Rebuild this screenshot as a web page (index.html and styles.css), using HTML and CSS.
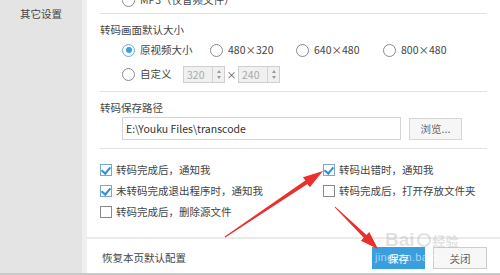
FILE: index.html
```html
<!DOCTYPE html>
<html>
<head>
<meta charset="utf-8">
<link rel="stylesheet" href="styles.css">
</head>
<body>
<div class="win">
  <aside class="side">
    <div class="side-item">其它设置</div>
  </aside>
  <div class="main">
    <div class="scroll">
      <div class="inner">
        <div class="row mp3"><span class="radio"></span><span class="lbl">MP3（仅音频文件）</span></div>
        <div class="sep s1"></div>
        <div class="title">转码画面默认大小</div>
        <div class="radios">
          <div class="opt"><span class="radio on"></span><span class="lbl">原视频大小</span></div>
          <div class="opt"><span class="radio"></span><span class="lbl">480×320</span></div>
          <div class="opt"><span class="radio"></span><span class="lbl">640×480</span></div>
          <div class="opt"><span class="radio"></span><span class="lbl">800×480</span></div>
        </div>
        <div class="custom">
          <div class="opt"><span class="radio"></span><span class="lbl">自定义</span></div>
          <div class="spin"><span class="val">320</span><span class="arrows"><i class="up"></i><i class="dn"></i></span></div>
          <span class="times">×</span>
          <div class="spin"><span class="val">240</span><span class="arrows"><i class="up"></i><i class="dn"></i></span></div>
        </div>
        <div class="sep s2"></div>
        <div class="title">转码保存路径</div>
        <div class="path">
          <div class="input">E:\Youku Files\transcode</div>
          <div class="btn browse">浏览...</div>
        </div>
        <div class="sep s3"></div>
        <div class="checks">
          <div class="chk"><span class="box on"></span><span class="lbl">转码完成后，通知我</span></div>
          <div class="chk"><span class="box on"></span><span class="lbl">转码出错时，通知我</span></div>
          <div class="chk"><span class="box on"></span><span class="lbl">未转码完成退出程序时，通知我</span></div>
          <div class="chk"><span class="box"></span><span class="lbl">转码完成后，打开存放文件夹</span></div>
          <div class="chk"><span class="box"></span><span class="lbl">转码完成后，删除源文件</span></div>
        </div>
      </div>
    </div>
    <div class="footer">
      <span class="reset">恢复本页默认配置</span>
      <div class="btns">
        <div class="btn save">保存</div>
        <div class="btn close">关闭</div>
      </div>
    </div>
  </div>
</div>
<div class="wm">
  <span class="wm-big">Bai</span><span class="wm-paw"></span><span class="wm-cn">经验</span>
</div>
<div class="wm-url">jingyan.baidu.com</div>
<svg class="arrows-ov" width="500" height="275" viewBox="0 0 500 275">
  <polygon points="224.7,236.6 305.3,180.5 303.0,177.2 323,171 309.8,187.2 307.5,183.9 225.3,237.4" fill="#e8302c"/>
  <polygon points="335.35,206.64 366.5,235.0 369.3,232.1 378,249 360.9,240.7 363.7,237.8 334.65,207.36" fill="#e8302c"/>
</svg>
</body>
</html>
```

FILE: styles.css
```css
* { box-sizing: border-box; }
html, body { margin: 0; padding: 0; }
body {
  width: 500px;
  height: 275px;
  overflow: hidden;
  position: relative;
  background: #fff;
  font-family: "Noto Sans CJK SC", "Noto Sans", sans-serif;
  font-size: 10.5px;
  color: #444;
}
.win {
  display: flex;
  width: 500px;
  height: 275px;
  border-bottom: 2px solid #c9c9c9;
}
.side {
  width: 87px;
  flex: none;
  background: #e4e4e4;
  border-right: 5px solid #efefef;
}
.side-item {
  padding: 6px 0 0 20px;
  height: 20px;
  line-height: 16px;
  color: #444;
}
.main {
  flex: 1;
  display: flex;
  flex-direction: column;
  min-width: 0;
}
.scroll {
  height: 237px;
  overflow: hidden;
  flex: none;
}
.inner {
  margin-top: -10px;
  padding: 0 13px;
}
.row, .opt, .chk {
  display: flex;
  align-items: center;
  height: 20px;
}
.mp3 { padding-left: 22px; }
.lbl { white-space: nowrap; line-height: 14px; }
.radio {
  width: 13px;
  height: 13px;
  border: 1px solid #8a8a8a;
  border-radius: 50%;
  background: #fff;
  flex: none;
  margin-right: 5px;
  position: relative;
}
.radio.on { border-color: #6aa9d8; }
.radio.on::after {
  content: "";
  position: absolute;
  left: 2.5px; top: 2.5px;
  width: 6px; height: 6px;
  border-radius: 50%;
  background: #3d9ee0;
}
.sep { height: 1px; background: #e2e2e2; }
.s1 { margin: 3px 0 8px; }
.s2 { margin: 7px 0 8px; }
.s3 { margin: 8px 0 10px; }
.title { height: 16px; line-height: 16px; }
.radios {
  margin-top: 2px;
  padding-left: 22px;
  display: grid;
  grid-template-columns: 88px 86px 87px auto;
}
.custom {
  margin-top: 4px;
  padding-left: 22px;
  display: flex;
  align-items: center;
  height: 20px;
}
.custom .opt { width: 61px; }
.spin {
  width: 42px;
  height: 17px;
  border: 1px solid #cfcfcf;
  background: #f0f0f0;
  display: flex;
  align-items: stretch;
}
.spin .val {
  flex: 1;
  padding-left: 3px;
  color: #aaa;
  line-height: 15px;
}
.spin .arrows {
  width: 12px;
  border-left: 1px solid #d2d2d2;
  display: flex;
  flex-direction: column;
  align-items: center;
  justify-content: center;
  gap: 3px;
}
.spin i { width: 0; height: 0; border-left: 2.5px solid transparent; border-right: 2.5px solid transparent; }
.spin i.up { border-bottom: 3px solid #999; }
.spin i.dn { border-top: 3px solid #999; }
.times { width: 13px; text-align: center; color: #555; font-size: 10px; }
.path {
  margin-top: 1px;
  padding-left: 22px;
  display: flex;
  align-items: center;
  gap: 8px;
}
.input {
  width: 279px;
  height: 23px;
  border: 1px solid #d4d4d4;
  line-height: 21px;
  padding-left: 3px;
  color: #333;
  font-size: 10.5px;
}
.btn {
  display: flex;
  align-items: center;
  justify-content: center;
  height: 22px;
  white-space: nowrap;
}
.browse {
  width: 53px;
  background: #f6f6f6;
  border: 1px solid #d6d6d6;
  color: #666;
}
.checks {
  display: grid;
  grid-template-columns: 223px auto;
  grid-auto-rows: 21px;
}
.chk { height: 21px; }
.box {
  width: 12px;
  height: 12px;
  border: 1px solid #8a8a8a;
  background: #fff;
  flex: none;
  margin-right: 4px;
  position: relative;
}
.box.on { border-color: #7aa6c9; }
.box.on::after {
  content: "";
  position: absolute;
  left: 2px; top: 0px;
  width: 4px; height: 7px;
  border-right: 2px solid #2f8fd8;
  border-bottom: 2px solid #2f8fd8;
  transform: rotate(40deg);
}
.footer {
  flex: 1;
  border-top: 2px solid #ebebeb;
  display: flex;
  align-items: flex-start;
  justify-content: space-between;
  padding: 8px 13px 0 15px;
}
.reset { line-height: 16px; margin-top: 3px; color: #444; }
.btns { display: flex; gap: 8px; }
.save {
  width: 53px;
  background: #3a9fde;
  color: #fff;
}
.close {
  width: 54px;
  background: #f7f7f7;
  border: 1px solid #cdcdcd;
  color: #555;
}
.wm {
  position: absolute;
  left: 385px;
  top: 229px;
  display: flex;
  align-items: center;
  pointer-events: none;
}
.wm-big {
  font-family: "Liberation Sans", sans-serif;
  font-weight: bold;
  font-size: 19px;
  color: rgba(170,170,170,0.35);
}
.wm-paw {
  width: 14px; height: 14px;
  border-radius: 50%;
  border: 2px solid rgba(170,170,170,0.35);
  margin: 0 2px;
}
.wm-cn { font-size: 13px; color: rgba(170,170,170,0.35); font-weight: bold; }
.wm-url {
  position: absolute;
  left: 375px;
  top: 251px;
  font-family: "Liberation Sans", sans-serif;
  font-size: 11px;
  color: rgba(255,255,255,0.55);
  letter-spacing: 0.3px;
  pointer-events: none;
}
.arrows-ov { position: absolute; left: 0; top: 0; pointer-events: none; }
```
